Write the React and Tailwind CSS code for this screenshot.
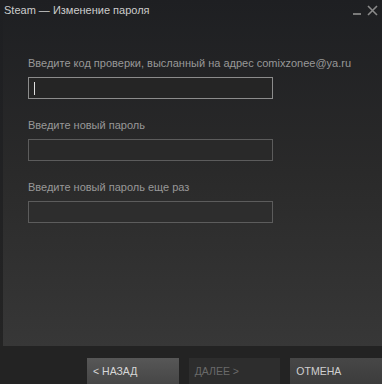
export default function App() {
  const font = { fontFamily: '"Liberation Sans", Arial, sans-serif' };
  return (
    <div className="w-[382px] h-[384px] bg-[#222222] flex flex-col overflow-hidden" style={font}>
      <div className="h-[348px] flex bg-[#1f2022]">
        <div className="w-[3px] bg-gradient-to-b from-[#1e1f22] to-[#242424]" />
        <div className="flex-1 flex flex-col bg-gradient-to-b from-[#1e1f22] via-[#2a2a2a] to-[#373737] relative">
          <div className="h-[20px] flex items-center justify-between pr-[4px] -ml-[3px] pl-[4px]">
            <span className="text-[11px] text-[#cccccc] leading-none">Steam — Изменение пароля</span>
            <div className="flex items-center gap-[6px]">
              <div className="w-[8px] h-[2px] bg-[#7a7a7a] mt-[7px]" />
              <svg width="11" height="11" viewBox="0 0 11 11">
                <path d="M1 1 L10 10 M10 1 L1 10" stroke="#8a8a8a" strokeWidth="1.6" />
              </svg>
            </div>
          </div>
          <div className="pl-[25px] pt-[36px] flex flex-col">
            <div className="text-[11px] text-[#989898] leading-[14px]">
              Введите код проверки, высланный на адрес comixzonee@ya.ru
            </div>
            <div className="mt-[7px] w-[245px] h-[22px] border border-[#8c8c8c] bg-[#252525] flex items-center pl-[5px]">
              <div className="w-[1px] h-[13px] bg-[#e0e0e0]" />
            </div>
            <div className="mt-[19px] text-[11px] text-[#989898] leading-[14px]">Введите новый пароль</div>
            <div className="mt-[7px] w-[245px] h-[22px] border border-[#5c5c5c] bg-[#292929]" />
            <div className="mt-[19px] text-[11px] text-[#989898] leading-[14px]">Введите новый пароль еще раз</div>
            <div className="mt-[7px] w-[245px] h-[22px] border border-[#5c5c5c] bg-[#2d2d2d]" />
          </div>
        </div>
      </div>
      <div className="flex-1 bg-[#232323] flex items-start pt-[12px] pl-[87px] gap-[10px]">
        <div className="w-[92px] h-[26px] bg-gradient-to-b from-[#575757] to-[#464646] text-[10.5px] text-[#d8d8d8] flex items-center pl-[6px] pt-[2px]">
          &lt; НАЗАД
        </div>
        <div className="w-[92px] h-[26px] bg-[#2d2d2d] text-[10.5px] text-[#6a6a6a] flex items-center pl-[6px] pt-[2px]">
          ДАЛЕЕ &gt;
        </div>
        <div className="w-[92px] h-[26px] bg-gradient-to-b from-[#474747] to-[#3c3c3c] text-[10.5px] text-[#d0d0d0] flex items-center pl-[6px] pt-[2px]">
          ОТМЕНА
        </div>
      </div>
    </div>
  );
}
